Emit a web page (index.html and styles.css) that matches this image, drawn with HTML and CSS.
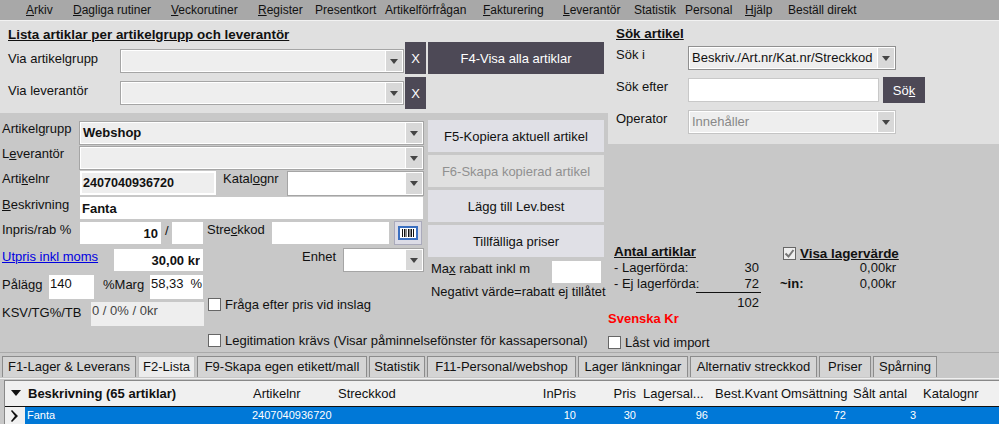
FILE: index.html
```html
<!DOCTYPE html>
<html lang="sv">
<head>
    <meta charset="UTF-8">
    <title>Artiklar</title>
    <link rel="stylesheet" href="styles.css">
</head>
<body>
    <div class="menu">
        <span class="m-arkiv"><u>A</u>rkiv</span>
        <span class="m-dag"><u>D</u>agliga rutiner</span>
        <span class="m-vec"><u>V</u>eckorutiner</span>
        <span class="m-reg"><u>R</u>egister</span>
        <span class="m-pre">Presentkort</span>
        <span class="m-art">Artikelförfrågan</span>
        <span class="m-fak"><u>F</u>akturering</span>
        <span class="m-lev"><u>L</u>everantör</span>
        <span class="m-sta">Statistik</span>
        <span class="m-per">Personal</span>
        <span class="m-hja"><u>H</u>jälp</span>
        <span class="m-bes">Beställ direkt</span>
    </div>

    <div class="main">
        <div class="left">
            <div class="filter">
                <div class="filter-fields">
                    <h3 class="title">Lista artiklar per artikelgrupp och leverantör</h3>
                    <div class="filter-row">
                        <label class="filter-label">Via artikelgrupp</label>
                        <div class="combo filter-combo"><span class="combo-text"></span><span class="arrow"></span></div>
                        <button class="dark x-btn">X</button>
                    </div>
                    <div class="filter-row filter-second">
                        <label class="filter-label">Via leverantör</label>
                        <div class="combo filter-combo"><span class="combo-text"></span><span class="arrow"></span></div>
                        <button class="dark x-btn">X</button>
                    </div>
                </div>
                <button class="dark f4-btn">F4-Visa alla artiklar</button>
            </div>

            <div class="article">
                <div class="fields">
                    <div class="row row-a">
                        <label class="lbl">Artikel<u>g</u>rupp</label>
                        <div class="combo wide"><span class="combo-text strong">Webshop</span><span class="arrow"></span></div>
                    </div>
                    <div class="row row-a">
                        <label class="lbl">L<u>e</u>verantör</label>
                        <div class="combo wide"><span class="combo-text"></span><span class="arrow"></span></div>
                    </div>
                    <div class="row row-c">
                        <label class="lbl">Arti<u>k</u>elnr</label>
                        <div class="artnr"><span>2407040936720</span></div>
                        <label class="lbl-kat">Katal<u>o</u>gnr</label>
                        <div class="combo white kat"><span class="combo-text"></span><span class="arrow"></span></div>
                    </div>
                    <div class="row row-d">
                        <label class="lbl"><u>B</u>eskrivning</label>
                        <input class="input strong desc" value="Fanta">
                    </div>

                    <div class="lower">
                        <div class="lower-left">
                            <div class="row row-in">
                                <label class="lbl">Inpris/rab %</label>
                                <input class="input strong num inpris" value="10">
                                <span class="slash">/</span>
                                <input class="input rab">
                            </div>
                            <div class="row row-ut">
                                <a class="link" href="#">Utpris inkl moms</a>
                                <input class="input strong num utpris" value="30,00 kr">
                            </div>
                            <div class="row row-pa">
                                <label class="lbl-pa">Pålägg</label>
                                <div class="small-box palagg">140</div>
                                <label class="lbl-marg">%Marg</label>
                                <div class="small-box marg"><span>58,33</span><span>%</span></div>
                            </div>
                            <div class="row row-ksv">
                                <label class="lbl-ksv">KSV/TG%/TB</label>
                                <div class="ksv">0 / 0% / 0kr</div>
                            </div>
                        </div>
                        <div class="lower-right">
                            <div class="row row-st">
                                <label class="lbl-st">Stre<u>c</u>kkod</label>
                                <input class="input streck">
                                <button class="scan">
                                    <svg width="20" height="14" viewBox="0 0 20 14">
                                        <rect x="1" y="1" width="18" height="12" fill="#fff" stroke="#3a6fc0" stroke-width="2"/>
                                        <path d="M4.5 3v8M6.5 3v8M8 3v8M10.5 3v8M12 3v8M13.5 3v8M15.5 3v8" stroke="#111" stroke-width="1" fill="none"/>
                                    </svg>
                                </button>
                            </div>
                            <div class="row row-en">
                                <label class="lbl-en">Enhet</label>
                                <div class="combo white enhet"><span class="combo-text"></span><span class="arrow"></span></div>
                            </div>
                            <label class="check check-fraga"><span class="box"></span>Fråga efter pris vid inslag</label>
                            <label class="check check-leg"><span class="box"></span>Legitimation krävs (Visar påminnelsefönster för kassapersonal)</label>
                        </div>
                    </div>
                </div>

                <div class="actions">
                    <button class="act">F5-Kopiera aktuell artikel</button>
                    <button class="act off">F6-Skapa kopierad artikel</button>
                    <button class="act">Lägg till Lev.best</button>
                    <button class="act">Tillfälliga priser</button>
                    <div class="max-row">
                        <label>Ma<u>x</u> rabatt inkl m</label>
                        <input class="input max">
                    </div>
                    <div class="neg">Negativt värde=rabatt ej tillåtet</div>
                </div>
            </div>
        </div>

        <div class="right">
            <div class="search">
                <h3 class="title search-title">Sök artikel</h3>
                <div class="s-row">
                    <label class="s-label">Sök i</label>
                    <div class="combo s-combo s-first"><span class="combo-text">Beskriv./Art.nr/Kat.nr/Streckkod</span><span class="arrow"></span></div>
                </div>
                <div class="s-row">
                    <label class="s-label">Sök efter</label>
                    <input class="input s-input">
                    <button class="dark s-btn">Sö<u>k</u></button>
                </div>
                <div class="s-row">
                    <label class="s-label">Operator</label>
                    <div class="combo s-combo s-off"><span class="combo-text">Innehåller</span><span class="arrow"></span></div>
                </div>
            </div>

            <div class="stock">
                <div class="count">
                    <h3 class="title stock-title">Antal artiklar</h3>
                    <div class="c-row"><span>- Lagerförda:</span><span>30</span></div>
                    <div class="c-row"><span>- Ej lagerförda:</span><span>72</span></div>
                    <div class="c-sum">102</div>
                </div>
                <div class="value">
                    <label class="v-head">
                        <span class="box checked">
                            <svg width="11" height="11" viewBox="0 0 11 11"><path d="M1.5 5.5l3 3 5-6.5" stroke="#777" stroke-width="2" fill="none"/></svg>
                        </span>
                        <span class="title">Visa lagervärde</span>
                    </label>
                    <div class="v-row"><span></span><span>0,00kr</span></div>
                    <div class="v-row"><b>~in:</b><span>0,00kr</span></div>
                </div>
            </div>
            <div class="currency">Svenska Kr</div>
            <label class="check check-last"><span class="box"></span>Låst vid import</label>
        </div>
    </div>

    <div class="tabs">
        <span class="tab t1">F1-Lager &amp; Leverans</span>
        <span class="tab t2 active">F2-Lista</span>
        <span class="tab t3">F9-Skapa egen etikett/mall</span>
        <span class="tab t4">Statistik</span>
        <span class="tab t5">F11-Personal/webshop</span>
        <span class="tab t6">Lager länkningar</span>
        <span class="tab t7">Alternativ streckkod</span>
        <span class="tab t8">Priser</span>
        <span class="tab t9">Spårning</span>
    </div>

    <div class="list">
        <div class="list-head">
            <span class="sort"></span>
            <div class="cols">
                <span class="c-name">Beskrivning (65 artiklar)</span>
                <span>Artikelnr</span>
                <span>Streckkod</span>
                <span class="r">InPris</span>
                <span class="r">Pris</span>
                <span>Lagersal...</span>
                <span>Best.Kvant</span>
                <span>Omsättning</span>
                <span>Sålt antal</span>
                <span>Katalognr</span>
            </div>
        </div>
        <div class="list-row">
            <span class="pointer">
                <svg width="8" height="12" viewBox="0 0 8 12"><path d="M1 0l6 6-6 6-1-1 4-5-4-5z" fill="#111"/></svg>
            </span>
            <div class="cols selected">
                <span>Fanta</span>
                <span>2407040936720</span>
                <span></span>
                <span class="r">10</span>
                <span class="r">30</span>
                <span class="r">96</span>
                <span class="r"></span>
                <span class="r">72</span>
                <span class="r">3</span>
                <span></span>
            </div>
        </div>
    </div>
</body>
</html>
```

FILE: styles.css
```css
* {
    box-sizing: border-box;
}
html, body {
    height: 424px;
    overflow: hidden;
}
body {
    margin: 0;
    background: #c8c8c8;
    color: #111;
    font-family: "Liberation Sans", Arial, sans-serif;
    font-size: 13px;
    line-height: 15px;
}
label {
    white-space: nowrap;
}
button {
    font: inherit;
    border: none;
    padding: 0;
}
u {
    text-underline-offset: 1px;
}

/* menu */
.menu {
    display: flex;
    height: 21px;
    padding-top: 3px;
    background: #a8a8a8;
    border-bottom: 1px solid #f2f2f2;
    font-size: 12px;
    white-space: nowrap;
}
.menu span {
    flex: none;
}
.m-arkiv { margin-left: 26px; width: 47px; }
.m-dag { width: 98px; }
.m-vec { width: 87px; }
.m-reg { width: 57px; }
.m-pre { width: 70px; }
.m-art { width: 98px; }
.m-fak { width: 80px; }
.m-lev { width: 71px; }
.m-sta { width: 51px; }
.m-per { width: 60px; }
.m-hja { width: 43px; }

/* shared */
.main {
    display: flex;
    height: 331px;
}
.left {
    width: 608px;
    flex: none;
}
.right {
    flex: 1;
    min-width: 0;
}
.title {
    margin: 0;
    font-size: 13.4px;
    font-weight: bold;
    text-decoration: underline;
    white-space: nowrap;
}
.dark {
    background: #4d4956;
    color: #fff;
}
.input {
    display: block;
    border: none;
    outline: none;
    background: #fff;
    color: #111;
    padding: 0 2px;
    font-family: inherit;
    font-size: 13px;
    margin: 0;
}
.strong {
    font-weight: bold;
}
.num {
    text-align: right;
    padding-right: 3px;
}
.combo {
    display: flex;
    flex: none;
    height: 24px;
    padding: 1px;
    background: #fff;
    border: 1px solid #a5a5a5;
}
.combo-text {
    flex: 1;
    background: #eee;
    padding: 2px 0 0 2px;
    white-space: nowrap;
    overflow: hidden;
}
.white .combo-text {
    background: #fff;
}
.arrow {
    position: relative;
    flex: none;
    width: 16px;
    margin-left: 1px;
    background: #d8d8d8;
}
.arrow::after {
    content: "";
    position: absolute;
    left: 4px;
    top: 8px;
    border: 4px solid transparent;
    border-top: 5px solid #444;
    border-bottom: 0;
}
.box {
    display: inline-block;
    flex: none;
    width: 13px;
    height: 13px;
    background: #fff;
    border: 1px solid #666;
}
.check {
    display: flex;
    align-items: center;
}
.check .box {
    margin-right: 4px;
}

/* filter panel */
.filter {
    display: flex;
    height: 92px;
    background: #e0e0e0;
}
.filter-fields {
    width: 428px;
    flex: none;
    padding: 6px 0 0 8px;
}
.filter-fields .title {
    height: 15px;
}
.filter-row {
    display: flex;
    margin-bottom: 3px;
}
.filter-label {
    width: 112px;
    flex: none;
    padding-top: 9px;
}
.filter-combo {
    width: 284px;
    margin-top: 7px;
}
.filter-second .filter-label {
    padding-top: 6px;
}
.filter-second .filter-combo {
    margin-top: 4px;
}
.x-btn {
    width: 21px;
    height: 32px;
    margin-left: 1px;
}
.f4-btn {
    width: 176px;
    height: 32px;
    margin-top: 21px;
}

/* article form */
.article {
    display: flex;
    height: 239px;
    white-space: nowrap;
}
.fields {
    width: 428px;
    flex: none;
    padding-top: 8px;
}
.row {
    display: flex;
}
.row-a {
    height: 25px;
}
.lbl {
    width: 79px;
    flex: none;
    padding-left: 2px;
}
.wide {
    width: 345px;
}
.row-c {
    height: 26px;
}
.artnr {
    width: 136px;
    height: 24px;
    flex: none;
    padding: 2px;
    margin-left: 1px;
    background: #fff;
}
.artnr span {
    display: block;
    height: 20px;
    padding: 3px 0 0 1px;
    background: #eee;
    font-weight: bold;
    font-size: 12.6px;
}
.lbl-kat {
    width: 71px;
    flex: none;
    padding-left: 7px;
}
.kat {
    width: 137px;
    height: 25px;
}
.row-d {
    height: 24px;
}
.desc {
    width: 343px;
    height: 22px;
    margin-left: 1px;
}
.lower {
    display: flex;
}
.lower-left {
    width: 205px;
    flex: none;
}
.lower-right {
    width: 223px;
    flex: none;
}
.row-in {
    height: 28px;
    padding-top: 1px;
}
.inpris {
    width: 81px;
    height: 22px;
    margin-left: 1px;
}
.slash {
    width: 11px;
    padding: 1px 0 0 4px;
}
.rab {
    width: 31px;
    height: 22px;
}
.row-ut {
    height: 26px;
    justify-content: space-between;
    padding-right: 2px;
}
.link {
    color: #0000e0;
    padding-left: 2px;
}
.utpris {
    width: 89px;
    height: 22px;
}
.row-pa {
    height: 27px;
}
.lbl-pa {
    width: 49px;
    flex: none;
    padding: 2px 0 0 2px;
}
.small-box {
    display: flex;
    justify-content: space-between;
    height: 24px;
    background: #fff;
    padding: 1px 1px 0;
    flex: none;
}
.palagg {
    width: 45px;
}
.lbl-marg {
    width: 56px;
    flex: none;
    padding: 2px 0 0 9px;
}
.marg {
    width: 53px;
}
.row-ksv {
    height: 24px;
}
.lbl-ksv {
    width: 91px;
    flex: none;
    padding: 3px 0 0 2px;
}
.ksv {
    width: 113px;
    height: 24px;
    background: #eee;
    padding: 1px 1px 0;
    color: #444;
}
.row-st {
    height: 27px;
}
.lbl-st {
    width: 67px;
    flex: none;
    padding: 1px 0 0 2px;
}
.streck {
    width: 117px;
    height: 22px;
    margin-top: 1px;
}
.scan {
    display: flex;
    align-items: center;
    justify-content: center;
    width: 28px;
    height: 24px;
    margin-left: 5px;
    background: #dcdce6;
    border: 1px solid #aaaabb;
}
.row-en {
    height: 50px;
    justify-content: flex-end;
    padding-right: 4px;
}
.lbl-en {
    margin-right: 7px;
    padding-top: 1px;
}
.enhet {
    width: 81px;
}
.check-fraga {
    height: 13px;
    margin-left: 3px;
}
.check-leg {
    height: 13px;
    margin: 23px 0 0 3px;
}

/* buttons column */
.actions {
    width: 180px;
    flex: none;
    padding-top: 7px;
}
.act {
    display: block;
    width: 176px;
    height: 32px;
    margin-bottom: 3px;
    background: #e0e0e6;
    color: #111;
}
.act.off {
    background: #e0e0e0;
    color: #909090;
}
.max-row {
    display: flex;
    justify-content: space-between;
    width: 170px;
    margin: 4px 0 0 3px;
}
.max {
    width: 49px;
    height: 22px;
}
.neg {
    margin: 1px 0 0 3px;
    font-size: 12.9px;
}

/* search panel */
.search {
    height: 123px;
    padding: 6px 0 0 8px;
    background: #e0e0e0;
}
.search-title {
    height: 19px;
    line-height: 13px;
}
.s-row {
    display: flex;
    height: 32px;
}
.s-label {
    width: 72px;
    flex: none;
    padding-top: 1px;
}
.s-combo {
    width: 208px;
}
.s-first {
    border-color: #909090;
}
.s-off {
    border-color: #c4c4c4;
}
.s-off .combo-text {
    color: #888;
}
.s-input {
    width: 191px;
    height: 24px;
    border: 1px solid #c8c8c8;
}
.s-btn {
    width: 42px;
    height: 26px;
    margin: -1px 0 0 4px;
}

/* stock */
.stock {
    display: flex;
    height: 168px;
    padding-top: 98px;
    padding-left: 6px;
}
.count {
    width: 147px;
    flex: none;
}
.stock-title {
    height: 18px;
    padding-top: 2px;
}
.c-row {
    display: flex;
    justify-content: space-between;
    height: 16px;
    padding-right: 2px;
}
.c-sum {
    margin-left: 82px;
    height: 18px;
    padding: 2px 2px 0 0;
    border-top: 1px solid #111;
    text-align: right;
}
.value {
    width: 116px;
    margin-left: 19px;
    flex: none;
}
.v-head {
    display: flex;
    align-items: center;
    gap: 4px;
    height: 14px;
    margin: 4px 0 0 3px;
}
.box.checked {
    display: flex;
    align-items: center;
    justify-content: center;
    background: #eee;
}
.v-row {
    display: flex;
    justify-content: space-between;
    height: 16px;
}
.currency {
    color: #f00;
    font-weight: bold;
    margin-top: -1px;
    height: 25px;
}
.check-last {
    height: 13px;
}

/* tabs */
.tabs {
    display: flex;
    height: 27px;
    padding: 3px 0 0 2px;
    border-top: 1px solid #aaa;
    border-bottom: 1px solid #f0f0f0;
    background: #c8c8c8;
}
.tab {
    display: block;
    height: 21px;
    margin-right: 2px;
    padding-top: 2px;
    text-align: center;
    white-space: nowrap;
    border: 1px solid #8c8c8c;
    border-bottom: none;
    background: #d4d4d4;
}
.tab.active {
    background: #ececec;
    border-color: #c0c0c0;
}
.t1 { width: 134px; }
.t2 { width: 57px; }
.t3 { width: 170px; }
.t4 { width: 56px; }
.t5 { width: 149px; }
.t6 { width: 110px; }
.t7 { width: 127px; }
.t8 { width: 52px; }
.t9 { width: 64px; }

/* list */
.list {
    margin: 1px 0 0 4px;
    border-top: 1px solid #888;
    border-left: 1px solid #888;
    background: #f0f0f0;
}
.cols {
    display: grid;
    grid-template-columns: 225px 85px 165px 80px 60px 72px 66px 72px 70px 79px;
    white-space: nowrap;
}
.cols span {
    padding-left: 3px;
    overflow: hidden;
}
.cols .r {
    padding: 0 4px 0 0;
    text-align: right;
}
.list-head {
    position: relative;
    height: 26px;
    padding: 5px 0 0 20px;
    border-bottom: 1px solid #111;
}
.cols .c-name {
    font-weight: bold;
}
.sort {
    position: absolute;
    left: 6px;
    top: 9px;
    border: 5px solid transparent;
    border-top: 6px solid #111;
    border-bottom: 0;
}
.list-row {
    display: flex;
    height: 17px;
}
.pointer {
    display: flex;
    align-items: center;
    justify-content: center;
    width: 20px;
    flex: none;
}
.selected {
    flex: 1;
    padding-top: 1px;
    background: #0078d7;
    color: #fff;
    font-size: 11px;
}
.selected span {
    padding-left: 2px;
}
```
